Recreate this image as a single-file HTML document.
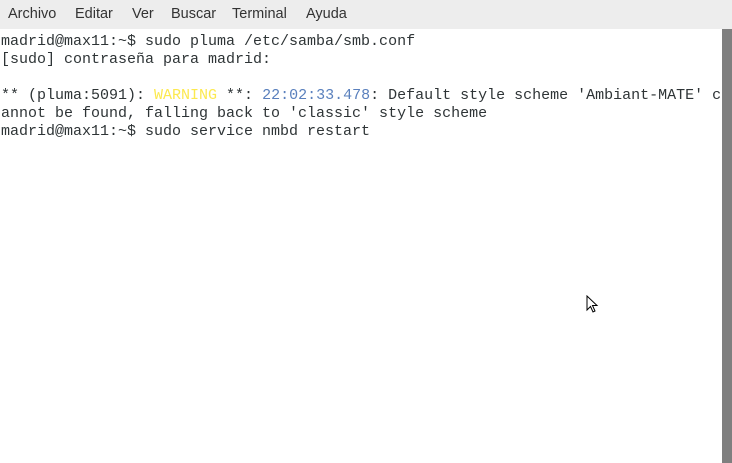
<!DOCTYPE html>
<html><head><meta charset="utf-8"><style>
html,body{margin:0;padding:0;width:732px;height:463px;overflow:hidden;background:#fff}
.menu{position:absolute;left:0;top:0;width:732px;height:29px;background:#ededed;font-family:"Liberation Sans",sans-serif;font-size:14.5px;color:#333}
.menu span{position:absolute;top:6px}
.sb{position:absolute;left:722px;top:29px;width:10px;height:434px;background:#7f7f7f}
pre{position:absolute;left:1px;top:33px;margin:0;font-family:"Liberation Mono",monospace;font-size:15px;line-height:18px;color:#2e3436;white-space:pre}
.y{color:#fce94f}.b{color:#5a80bd}
</style></head><body>
<div class="menu"><span style="left:8px">Archivo</span><span style="left:75px">Editar</span><span style="left:132px">Ver</span><span style="left:171px">Buscar</span><span style="left:232px">Terminal</span><span style="left:306px">Ayuda</span></div>
<pre>madrid@max11:~$ sudo pluma /etc/samba/smb.conf
[sudo] contraseña para madrid:

** (pluma:5091): <span class="y">WARNING</span> **: <span class="b">22:02:33.478</span>: Default style scheme 'Ambiant-MATE' c
annot be found, falling back to 'classic' style scheme
madrid@max11:~$ sudo service nmbd restart</pre>
<div class="sb"></div>
<svg style="position:absolute;left:586px;top:295px" width="14" height="20" viewBox="0 0 14 20"><path d="M1 1 L1 15 L4.5 11.5 L7 17 L9 16 L6.5 10.5 L11 10.5 Z" fill="#fff" stroke="#000" stroke-width="1"/></svg>
</body></html>
